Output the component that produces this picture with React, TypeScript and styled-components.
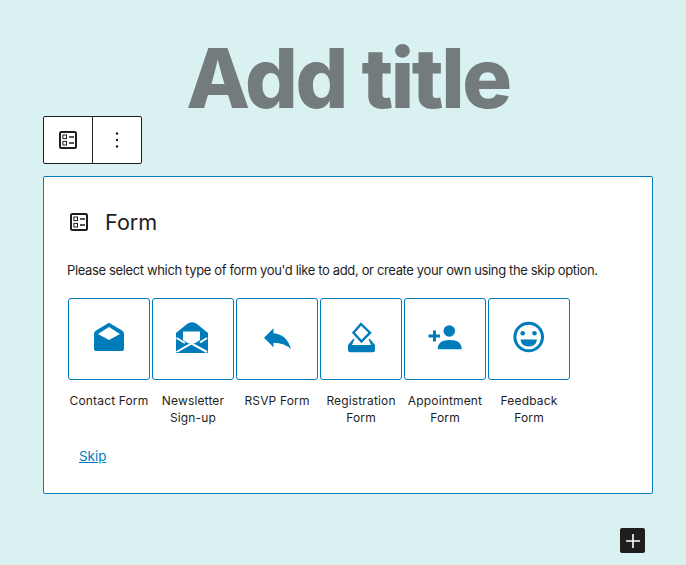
import React from 'react';
import styled, { createGlobalStyle } from 'styled-components';

const GlobalStyle = createGlobalStyle`
    html,
    body {
        margin: 0;
        height: 100%;
        overflow: hidden;
        background: #d9f1f1;
        font-family: Inter, 'Liberation Sans', sans-serif;
    }
`;

const Page = styled.div`
    display: flex;
    flex-direction: column;
    width: 686px;
    height: 565px;
    padding: 27px 33px 0 43px;
    box-sizing: border-box;
`;

const Title = styled.h1`
    margin: 0;
    height: 89px;
    font-size: 83px;
    line-height: 102px;
    font-weight: 800;
    letter-spacing: -2.5px;
    text-align: center;
    color: #737b7c;
`;

const Toolbar = styled.div`
    display: flex;
    width: 99px;
    height: 48px;
    box-sizing: border-box;
    border: 1px solid #1e1e1e;
    border-radius: 2px;
    background: #fff;
`;

const ToolbarButton = styled.div<{ $divided?: boolean }>`
    display: flex;
    flex: 1;
    align-items: center;
    justify-content: center;
    border-right: ${({ $divided }) => ($divided ? '1px solid #1e1e1e' : 'none')};
`;

const Placeholder = styled.section`
    width: 610px;
    height: 318px;
    margin-top: 12px;
    padding: 24px 23px;
    box-sizing: border-box;
    border: 1px solid #007cba;
    border-radius: 2px;
    background: #fff;
    color: #1e1e1e;
`;

const Heading = styled.div`
    display: flex;
    align-items: center;
    gap: 14px;
    height: 42px;
    font-size: 21.6px;
`;

const Instructions = styled.p`
    margin: 15px 0 0;
    font-size: 13px;
    line-height: 24px;
    letter-spacing: -0.36px;
    white-space: nowrap;
`;

const Options = styled.ul`
    display: flex;
    margin: 16px 0 0;
    padding: 0;
    list-style: none;
`;

const Option = styled.li`
    display: flex;
    flex-direction: column;
    align-items: center;
    width: 84px;
    padding: 0 1px;
    box-sizing: border-box;
`;

const OptionButton = styled.div`
    display: flex;
    justify-content: center;
    width: 82px;
    height: 82px;
    padding-top: 20px;
    box-sizing: border-box;
    border: 1px solid #007cba;
    border-radius: 3px;
    color: #007cba;
`;

const OptionLabel = styled.span`
    width: 82px;
    margin-top: 12px;
    font-size: 12px;
    line-height: 17px;
    letter-spacing: 0.15px;
    text-align: center;
`;

const SkipLink = styled.a`
    display: block;
    margin: 18px 0 0 12px;
    font-size: 13.4px;
    line-height: 24px;
    color: #007cba;
    text-decoration: underline;
`;

const InserterRow = styled.div`
    display: flex;
    justify-content: flex-end;
    margin-top: 34px;
    padding-right: 8px;
`;

const Inserter = styled.div`
    display: flex;
    align-items: center;
    justify-content: center;
    width: 25px;
    height: 25px;
    border-radius: 2px;
    background: #1e1e1e;
`;

const FormIcon = () => (
    <svg width="24" height="24" viewBox="0 0 24 24" fill="none" stroke="#1e1e1e">
        <rect x="4" y="4" width="16" height="16" rx="1.5" strokeWidth="2" />
        <rect x="6.9" y="7" width="3.6" height="3.6" strokeWidth="1" />
        <rect x="6.9" y="13.4" width="3.6" height="3.6" strokeWidth="1" />
        <path d="M13 9h5M13 15h5" strokeWidth="1.6" />
    </svg>
);

const icon = {
    width: 40,
    height: 40,
    viewBox: '0 0 40 40',
    fill: 'currentColor',
};

const ContactIcon = () => (
    <svg {...icon}>
        <path
            fillRule="evenodd"
            d="M20 3.7 33 11.5Q35 12.8 35 15V30Q35 32 33 32H7Q5 32 5 30V15Q5 12.8 7 11.5ZM20 8 9 15 20 21 31 15Z"
        />
    </svg>
);

const NewsletterIcon = () => (
    <svg {...icon}>
        <path d="M3 14 14 5Q19 1.5 24 5L35 14V34H3Z" />
        <path fill="#fff" d="M10 12.5H27V21L22 24.2H15L10 21Z" />
        <path
            fill="none"
            stroke="#fff"
            strokeWidth="2"
            d="M3.5 33 18.5 24.5 34 33M3.5 19 12 24M34 19 27 23.5"
        />
    </svg>
);

const ReplyIcon = () => (
    <svg {...icon}>
        <path d="M7 18.7 16.5 9.3V14.3Q30 15.5 34 30.3 28 24 16.5 23.7V28.3Z" />
    </svg>
);

const RegistrationIcon = () => (
    <svg {...icon}>
        <path
            fillRule="evenodd"
            d="M12 20 7 26V31Q7 33.3 9.5 33.3H31.5Q34 33.3 34 31V26L29 20H27.5L30 26H11L13.5 20Z"
        />
        <path fill="none" stroke="currentColor" strokeWidth="2.4" d="M20 5 29 13.7 20.5 22.5 12.5 13.7Z" />
    </svg>
);

const AppointmentIcon = () => (
    <svg {...icon}>
        <circle cx="24.3" cy="12" r="5.8" />
        <path d="M12.7 30.3Q12.7 21 24.7 21 36.7 21 36.7 30.3Z" />
        <path d="M8 11.5h3v4h4v3h-4v4H8v-4H3.5v-3H8Z" />
    </svg>
);

const FeedbackIcon = () => (
    <svg {...icon}>
        <circle cx="19.7" cy="18" r="13.8" fill="none" stroke="currentColor" strokeWidth="3" />
        <circle cx="13.7" cy="14.3" r="2.3" />
        <circle cx="25.5" cy="14.3" r="2.3" />
        <path d="M11.5 20.5H28Q27 27.5 19.7 27.5 12.5 27.5 11.5 20.5Z" />
    </svg>
);

const options = [
    { label: 'Contact Form', Icon: ContactIcon },
    { label: 'Newsletter Sign-up', Icon: NewsletterIcon },
    { label: 'RSVP Form', Icon: ReplyIcon },
    { label: 'Registration Form', Icon: RegistrationIcon },
    { label: 'Appointment Form', Icon: AppointmentIcon },
    { label: 'Feedback Form', Icon: FeedbackIcon },
];

export default function App() {
    return (
        <Page>
            <GlobalStyle />
            <Title>Add title</Title>
            <Toolbar>
                <ToolbarButton $divided>
                    <FormIcon />
                </ToolbarButton>
                <ToolbarButton>
                    <svg width="24" height="24" viewBox="0 0 24 24" fill="#1e1e1e">
                        <circle cx="12" cy="5.5" r="1.2" />
                        <circle cx="12" cy="12" r="1.2" />
                        <circle cx="12" cy="18.5" r="1.2" />
                    </svg>
                </ToolbarButton>
            </Toolbar>
            <Placeholder>
                <Heading>
                    <FormIcon />
                    Form
                </Heading>
                <Instructions>
                    Please select which type of form you'd like to add, or create your own using the skip option.
                </Instructions>
                <Options>
                    {options.map(({ label, Icon }) => (
                        <Option key={label}>
                            <OptionButton>
                                <Icon />
                            </OptionButton>
                            <OptionLabel>{label}</OptionLabel>
                        </Option>
                    ))}
                </Options>
                <SkipLink href="#">Skip</SkipLink>
            </Placeholder>
            <InserterRow>
                <Inserter>
                    <svg width="24" height="24" viewBox="0 0 24 24" fill="#fff">
                        <path d="M11.2 5h1.6v6.2H19v1.6h-6.2V19h-1.6v-6.2H5v-1.6h6.2Z" />
                    </svg>
                </Inserter>
            </InserterRow>
        </Page>
    );
}
